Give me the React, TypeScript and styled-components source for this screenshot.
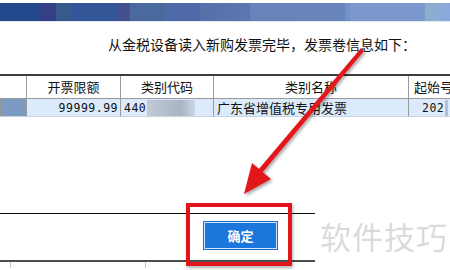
import React from 'react';
import styled, {createGlobalStyle} from "styled-components";

const GlobalStyle = createGlobalStyle`
  html, body {
    margin: 0;
    padding: 0;
    background: #fff;
    overflow: hidden;
  }
`

const columns = "26px 94px 93px 195px 42px";

export default function App() {
    return (
        <Page>
            <GlobalStyle/>
            <TitleBar/>
            <Message>从金税设备读入新购发票完毕，发票卷信息如下：</Message>

            <Table>
                <HeadCell/>
                <HeadCell>开票限额</HeadCell>
                <HeadCell>类别代码</HeadCell>
                <HeadCell>类别名称</HeadCell>
                <HeadCell $align="left">起始号码</HeadCell>

                <DataCell $selected/>
                <DataCell $align="right"><Mono>99999.99</Mono></DataCell>
                <DataCell><Mono>440</Mono><Blur $width={48}/></DataCell>
                <DataCell>广东省增值税专用发票</DataCell>
                <DataCell $pad={13}><Mono>202</Mono><Blur $width={10}/></DataCell>
            </Table>

            <Spacer/>
            <Footer>
                <Rule/>
                <ButtonRow>
                    <OkButton>确定</OkButton>
                </ButtonRow>
                <BottomRule>
                    <Tick $left={10}/>
                    <Tick $left={145}/>
                </BottomRule>
            </Footer>

            <Highlight/>
            <Watermark>软件技巧</Watermark>
            <Arrow width="450" height="270" viewBox="0 0 450 270">
                <defs>
                    <filter id="shadow" x="-20%" y="-20%" width="140%" height="140%">
                        <feDropShadow dx="1.5" dy="2" stdDeviation="1.5" floodColor="#000" floodOpacity="0.35"/>
                    </filter>
                </defs>
                <g filter="url(#shadow)">
                    <path d="M361 48 L364 51 L262 173 L258 170 Z" fill="#e3191c"/>
                    <polygon points="244,194 252,163 271,179" fill="#e3191c"/>
                </g>
            </Arrow>
        </Page>
    );
}

const Page = styled.div`
  position: relative;
  width: 450px;
  height: 270px;
  overflow: hidden;
  display: flex;
  flex-direction: column;
  background: #fff;
  font-family: "Noto Sans CJK SC", sans-serif;
  color: #111;
`

const TitleBar = styled.div`
  margin-top: 3px;
  height: 18px;
  border-bottom: 1px solid #e4e8ef;
  background: linear-gradient(90deg,
    #23488c 0px, #23488c 40px,
    #353f85 40px, #353f85 56px,
    #365a8a 56px, #365a8a 70px,
    #325697 70px, #325697 118px,
    #47508f 118px, #47508f 130px,
    #4a6a9e 130px, #4a6a9e 165px,
    #4f6aa8 165px, #4f6aa8 200px,
    #5670a9 200px, #5a78b0 250px,
    #6783ba 250px, #6886bb 345px,
    #6e8fd0 345px, #7894c9 350px,
    #7b98cd 350px, #7b98cd 425px,
    #8cb0cc 425px, #8aa8dc 450px);
`

const Message = styled.div`
  height: 52px;
  box-sizing: border-box;
  padding: 13px 0 0 108px;
  font-size: 14px;
  line-height: 19px;
  white-space: nowrap;
`

const Table = styled.div`
  display: grid;
  grid-template-columns: ${columns};
  grid-template-rows: 23px 18px;
  border-top: 2px solid #3c3c3c;
  font-size: 13px;
  white-space: nowrap;
`

const HeadCell = styled.div<{ $align?: "left" | "center" }>`
  display: flex;
  align-items: center;
  justify-content: ${p => p.$align === "left" ? "flex-start" : "center"};
  padding-left: ${p => p.$align === "left" ? "5px" : "0"};
  padding-bottom: 1px;
  border-left: 1px solid #9a9a9a;
  border-bottom: 1px solid #9a9a9a;
  overflow: hidden;

  &:first-child {
    border-left: none;
  }
`

const DataCell = styled.div<{ $align?: "right"; $selected?: boolean; $pad?: number }>`
  display: flex;
  align-items: center;
  justify-content: ${p => p.$align === "right" ? "flex-end" : "flex-start"};
  padding: 0 2px 0 ${p => p.$pad ?? 3}px;
  background: ${p => p.$selected ? "#7b9bc3" : "#dcebfb"};
  border-left: 1px solid #9a9a9a;
  border-bottom: 1px solid #c8d4e2;
  overflow: hidden;

  &:first-of-type {
    border-left: none;
  }
`

const Mono = styled.span`
  font-family: "DejaVu Sans Mono", monospace;
  font-size: 11.5px;
  letter-spacing: 0.5px;
`

const Blur = styled.span<{ $width: number }>`
  display: inline-block;
  width: ${p => p.$width}px;
  height: 16px;
  margin-left: 1px;
  background: linear-gradient(90deg, #c2cad6, #a9b3c2 70%, #cdd6e2);
  filter: blur(0.5px);
`

const Spacer = styled.div`
  flex: 1;
`

const Footer = styled.div`
  display: flex;
  flex-direction: column;
  height: 62px;
  flex-shrink: 0;
`

const Rule = styled.div`
  width: 315px;
  height: 1px;
  background: #111;
  margin-top: 5px;
`

const ButtonRow = styled.div`
  display: flex;
  padding: 7px 0 0 203px;
  height: 38px;
  box-sizing: border-box;
`

const OkButton = styled.button`
  width: 75px;
  height: 29px;
  box-sizing: border-box;
  border: 1px solid #1a6fd0;
  box-shadow: inset 0 0 0 1px #cfe3fa;
  background: #1d76dc;
  color: #fff;
  font-family: "Noto Sans CJK SC", sans-serif;
  font-weight: 700;
  font-size: 13px;
  padding: 0;
`

const BottomRule = styled.div`
  position: relative;
  width: 315px;
  height: 2px;
  margin-top: 8px;
  background: #4d4d4d;
`

const Tick = styled.span<{ $left: number }>`
  position: absolute;
  left: ${p => p.$left}px;
  top: 2px;
  width: 1px;
  height: 6px;
  background: #c8c8c8;
`

const Highlight = styled.div`
  position: absolute;
  left: 186px;
  top: 203px;
  width: 106px;
  height: 63px;
  box-sizing: border-box;
  border: 4px solid #e3151b;
  box-shadow: 1px 2px 3px rgba(0, 0, 0, 0.3);
`

const Watermark = styled.div`
  position: absolute;
  left: 320px;
  top: 218px;
  font-size: 31px;
  line-height: 36px;
  letter-spacing: 1px;
  color: rgba(150, 150, 150, 0.35);
  font-family: "Noto Sans CJK SC", sans-serif;
`

const Arrow = styled.svg`
  position: absolute;
  left: 0;
  top: 0;
  pointer-events: none;
`
